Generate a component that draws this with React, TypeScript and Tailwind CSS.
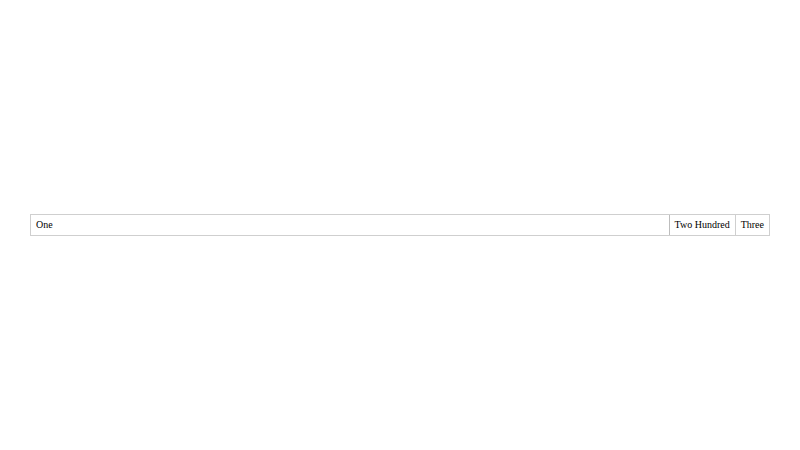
export default function App() {
  return (
    <div className="w-[800px] h-[450px] bg-white flex items-center px-[30px]" style={{ fontFamily: '"Liberation Serif", serif' }}>
      <div className="flex w-full h-[22px] border border-[#cfcfcf] text-[10px] text-black leading-[20px]">
        <div className="flex-1 px-[5px]">One</div>
        <div className="px-[5px] border-l border-[#bdbdbd] whitespace-nowrap">Two Hundred</div>
        <div className="px-[5px] border-l border-[#cfcfcf] whitespace-nowrap">Three</div>
      </div>
    </div>
  );
}
